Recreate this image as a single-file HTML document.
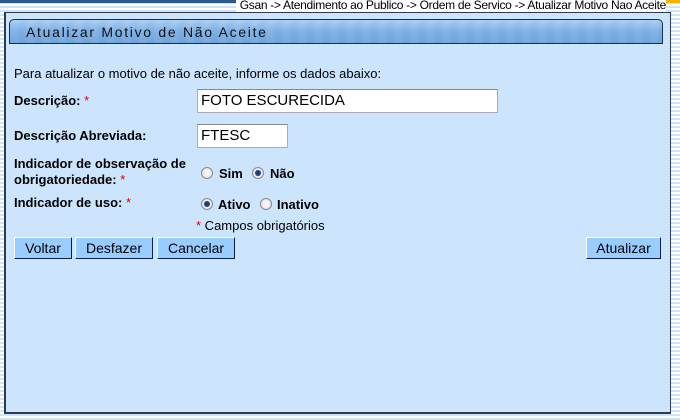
<!DOCTYPE html>
<html><head><meta charset="utf-8"><style>
body{margin:0;width:680px;height:420px;overflow:hidden;font-family:"Liberation Sans",Arial,sans-serif;font-size:13px;color:#000;
background:repeating-linear-gradient(#fff 0 2px,#cfe3f6 2px 4px);position:relative}
.abs{position:absolute}
.topbar{left:0;top:0;width:680px;height:3px;background:#2a5a8e}
.topbar2{left:560px;top:0;width:120px;height:3px;background:#f5b400}
.crumb{right:14px;top:-1px;font-size:12px;letter-spacing:-0.3px;background:#fff;padding:0 0 0 4px;line-height:13px}
.box{left:4px;top:12px;width:664px;height:399px;background:#cce5fd;border:1px solid #2d3a4e;border-left-width:2px;border-bottom-width:2px}
.title{left:9px;top:19px;width:654px;height:25px;border:1px solid #1d2f45;border-radius:5px 5px 0 0;
background:repeating-linear-gradient(90deg,rgba(255,255,255,.06) 0 8px,rgba(0,0,0,0) 8px 16px),linear-gradient(#a9cdf1,#7fb1e6 45%,#6ea3dc);
font-size:14px;letter-spacing:1.7px;color:#111;line-height:25px;padding-left:16px;box-sizing:border-box}
.t{font-size:13px}
b{font-weight:bold}
.r{color:#d00}
.inp{background:#fff;border:1px solid #aab;border-top-color:#888;font-size:15px;padding-left:3px;box-sizing:border-box;line-height:22px}
.btn{background:#99ccff;border:1px solid;border-color:#fff #0d2048 #0d2048 #fff;height:22px;box-sizing:border-box;text-align:center;font-size:14px;line-height:20px}
.rad{width:12px;height:12px;border-radius:50%;border:1px solid #8a8a8a;background:radial-gradient(#fff,#ddd);box-sizing:border-box}
.rad.on::after{content:"";position:absolute;left:2px;top:2px;width:6px;height:6px;border-radius:50%;background:#1d3f7a}
</style></head><body>
<div class="abs topbar"></div><div class="abs topbar2"></div>
<div class="abs crumb">Gsan -&gt; Atendimento ao Publico -&gt; Ordem de Servico -&gt; Atualizar Motivo Nao Aceite</div>
<div class="abs box"></div>
<div class="abs title">Atualizar Motivo de Não Aceite</div>
<div class="abs t" style="left:14px;top:66px">Para atualizar o motivo de não aceite, informe os dados abaixo:</div>
<div class="abs t" style="left:14px;top:93px"><b>Descrição:</b> <span class="r">*</span></div>
<div class="abs inp" style="left:197px;top:89px;width:301px;height:24px">FOTO ESCURECIDA</div>
<div class="abs t" style="left:14px;top:128px"><b>Descrição Abreviada:</b></div>
<div class="abs inp" style="left:197px;top:124px;width:91px;height:24px">FTESC</div>
<div class="abs t" style="left:14px;top:156px;line-height:16px"><b>Indicador de observação de<br>obrigatoriedade:</b> <span class="r">*</span></div>
<div class="abs rad" style="left:201px;top:167px"></div><div class="abs t" style="left:219px;top:166px"><b>Sim</b></div>
<div class="abs rad on" style="left:252px;top:167px"></div><div class="abs t" style="left:270px;top:166px"><b>Não</b></div>
<div class="abs t" style="left:14px;top:195px"><b>Indicador de uso:</b> <span class="r">*</span></div>
<div class="abs rad on" style="left:201px;top:198px"></div><div class="abs t" style="left:218px;top:197px"><b>Ativo</b></div>
<div class="abs rad" style="left:260px;top:198px"></div><div class="abs t" style="left:277px;top:197px"><b>Inativo</b></div>
<div class="abs t" style="left:196px;top:218px"><span class="r">*</span> Campos obrigatórios</div>
<div class="abs btn" style="left:14px;top:237px;width:58px">Voltar</div>
<div class="abs btn" style="left:75px;top:237px;width:78px">Desfazer</div>
<div class="abs btn" style="left:157px;top:237px;width:78px">Cancelar</div>
<div class="abs btn" style="left:586px;top:237px;width:75px">Atualizar</div>
</body></html>
